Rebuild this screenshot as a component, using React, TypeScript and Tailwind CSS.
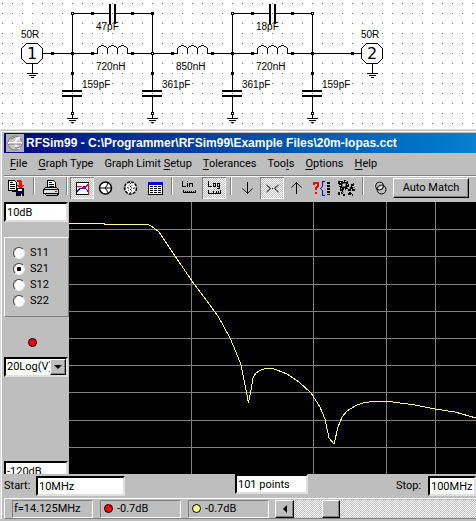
import { useState, type ReactNode } from "react";

const checker =
  "bg-[conic-gradient(#fff_25%,#bebebe_0_50%,#fff_0_75%,#bebebe_0)] bg-[length:2px_2px]";
const raised =
  "border border-t-white border-l-white border-r-black border-b-black bg-[#bebebe] shadow-[inset_-1px_-1px_0_#808080]";
const sunkenBox =
  "border-2 border-t-black border-l-black border-r-[#dfdfdf] border-b-[#dfdfdf] bg-white";
const field = `${sunkenBox} h-5 min-w-0 rounded-none px-px text-[11px] leading-4 text-black outline-none`;

/* ---------- schematic ---------- */

function Ground({ x, y }: { x: number; y: number }) {
  return (
    <g fill="#000">
      <rect x={x - 5} y={y} width="11" height="1" />
      <rect x={x - 3} y={y + 2} width="7" height="1" />
      <rect x={x - 1} y={y + 4} width="3" height="1" />
    </g>
  );
}

function Node({ x, y, open = false }: { x: number; y: number; open?: boolean }) {
  return (
    <g>
      <rect x={x - 1} y={y - 1} width="3" height="3" fill="#000" />
      {open && <rect x={x} y={y} width="1" height="1" fill="#fff" />}
    </g>
  );
}

function Label({ x, y, children }: { x: number; y: number; children: ReactNode }) {
  return (
    <text x={x} y={y} fontSize="10" fill="#000">
      {children}
    </text>
  );
}

function ShuntCap({ x, value }: { x: number; value: string }) {
  return (
    <g>
      <rect x={x} y="53" width="1" height="37" fill="#000" />
      <rect x={x} y="97" width="1" height="21" fill="#000" />
      <rect x={x - 10} y="90" width="20" height="2" fill="#000" />
      <rect x={x - 10} y="95" width="20" height="2" fill="#000" />
      <Node x={x} y={73} />
      <Node x={x} y={113} open />
      <Ground x={x} y={118} />
      <Label x={x + 10} y={88}>{value}</Label>
    </g>
  );
}

function SeriesCap({ x, value }: { x: number; value: string }) {
  return (
    <g>
      <path d={`M${x} 53V13h37v1h-36v39zM${x + 44} 13h37v40h-1v-39h-36z`} fill="#000" />
      <rect x={x + 37} y="4" width="2" height="20" fill="#000" />
      <rect x={x + 42} y="4" width="2" height="20" fill="#000" />
      <Node x={x + 20} y={13} />
      <Node x={x + 60} y={13} />
      <Label x={x + 24} y={30}>{value}</Label>
    </g>
  );
}

function Inductor({ x, value }: { x: number; value: string }) {
  const s = x + 5.5;
  return (
    <g>
      <path
        d={`M${x} 53.5H${s}V48.5L${s + 2} 46.5L${s + 5} 45.5L${s + 8} 46.5L${s + 10} 48.5L${s + 12} 46.5L${s + 15} 45.5L${s + 18} 46.5L${s + 20} 48.5L${s + 22} 46.5L${s + 25} 45.5L${s + 28} 46.5L${s + 30} 48.5V53.5H${x + 41}M${s + 10} 48.5V53.5M${s + 20} 48.5V53.5`}
        fill="none"
        stroke="#000"
      />
      <Node x={x} y={53} />
      <Node x={x + 40} y={53} />
      <Label x={x + 4} y={70}>{value}</Label>
    </g>
  );
}

function Port({ x, n }: { x: number; n: string }) {
  return (
    <g>
      <path
        d={`M${x - 5.5} 43.5h11l5 5v10l-5 5h-11l-5 -5v-10z`}
        fill="#fff"
        stroke="#000"
      />
      <rect x={x} y="63" width="1" height="10" fill="#000" />
      <Ground x={x} y={73} />
      <text x={x} y="59" fontSize="16" textAnchor="middle" className="font-['DejaVu_Sans',sans-serif]">
        {n}
      </text>
      <Label x={x - 11} y={38}>50R</Label>
    </g>
  );
}

function Schematic() {
  return (
    <svg
      className="block h-[129px] w-full font-['Liberation_Sans',Arial,sans-serif]"
      shapeRendering="crispEdges"
      role="img"
      aria-label="Low-pass filter schematic"
    >
      <defs>
        <pattern id="grid" width="10" height="10" patternUnits="userSpaceOnUse">
          <rect x="2" y="3" width="1" height="1" fill="#777" />
        </pattern>
      </defs>
      <rect width="100%" height="100%" fill="#fff" />
      <rect width="100%" height="100%" fill="url(#grid)" />
      <path d="M42 53.5h50M132 53.5h40M212 53.5h40M292 53.5h71" stroke="#000" />
      <Node x={52} y={53} />
      <Node x={352} y={53} />
      <SeriesCap x={72} value="47pF" />
      <SeriesCap x={232} value="18pF" />
      <Inductor x={92} value="720nH" />
      <Inductor x={172} value="850nH" />
      <Inductor x={252} value="720nH" />
      <ShuntCap x={72} value="159pF" />
      <ShuntCap x={152} value="361pF" />
      <ShuntCap x={232} value="361pF" />
      <ShuntCap x={312} value="159pF" />
      <Node x={72} y={13} open />
      <Node x={152} y={13} />
      <Node x={232} y={13} open />
      <Node x={312} y={13} open />
      <Node x={72} y={53} />
      <Node x={152} y={53} open />
      <Node x={232} y={53} />
      <Node x={312} y={53} />
      <Port x={32} n="1" />
      <Port x={372} n="2" />
    </svg>
  );
}

/* ---------- window chrome ---------- */

function TitleBar() {
  return (
    <div className="flex h-5 items-center gap-[2px] bg-linear-to-r from-[#000080] to-[#0a80d0] pl-[2px]">
      <svg className="size-[18px] shrink-0" viewBox="0 0 18 18">
        <rect width="18" height="18" fill="#b0b0b0" />
        <circle cx="9" cy="9" r="7" fill="#c8c8c8" stroke="#777" />
        <path d="M2 9h14M9 9q1-5 5-5M9 9q1 5 5 5" stroke="#fff" strokeWidth="2" fill="none" />
        <path d="M3 10h12M5 5l4-2M9 14l5-1" stroke="#777" fill="none" />
      </svg>
      <h1 className="truncate text-[12px] leading-5 font-bold whitespace-pre text-white font-['Liberation_Sans',Arial,sans-serif]">
        RFSim99 - C:\Programmer\RFSim99\Example Files\20m-lopas.cct
      </h1>
    </div>
  );
}

const menus: [string, string, string][] = [
  ["", "F", "ile"],
  ["", "G", "raph Type"],
  ["Graph Limit ", "S", "etup"],
  ["", "T", "olerances"],
  ["Too", "l", "s"],
  ["", "O", "ptions"],
  ["", "H", "elp"],
];

function MenuBar() {
  return (
    <nav className="flex h-[22px] items-center gap-[11px] pl-[6px]">
      {menus.map(([a, b, c]) => (
        <button key={a + b + c} type="button" className="whitespace-pre">
          {a}
          <u className="underline-offset-2">{b}</u>
          {c}
        </button>
      ))}
    </nav>
  );
}

function Tool({ label, on = false, children }: { label: string; on?: boolean; children: ReactNode }) {
  return (
    <button
      type="button"
      aria-label={label}
      aria-pressed={on}
      className={
        on
          ? `${checker} h-[22px] w-6 shrink-0 shadow-[inset_1px_1px_0_#808080,inset_-1px_-1px_0_#fff]`
          : "h-[22px] w-6 shrink-0"
      }
    >
      <svg className="block h-[22px] w-6" viewBox="0 0 24 22" fill="none" stroke="#000" shapeRendering="crispEdges">
        {children}
      </svg>
    </button>
  );
}

function Sep({ className }: { className: string }) {
  return (
    <div className={`flex h-[18px] shrink-0 justify-center ${className}`}>
      <div className="w-[2px] border-l border-l-[#808080] bg-white" />
    </div>
  );
}

function Gear({ x, y }: { x: number; y: number }) {
  return (
    <g>
      <circle cx={x} cy={y} r="4" strokeWidth="2" strokeDasharray="2 1" />
      <circle cx={x} cy={y} r="2.500" fill="#777" />
      <rect x={x - 1} y={y - 1} width="2" height="2" fill="#ddd" stroke="none" />
    </g>
  );
}

function Toolbar() {
  return (
    <div className="flex h-[26px] items-start border-t border-t-white pr-[7px]">
      <Tool label="Load file">
        <path d="M4.500 3.500h6l2 2v8h-8z" fill="#fff" />
        <path d="M6 5.500h3M6 7.500h5M6 9.500h5M6 11.500h5" />
        <path d="M7.500 14.500h5" />
        <path d="M13 3h3l2 2v3h2l-4 4-3-4h2V5h-2z" fill="#f00" stroke="none" />
        <path d="M12 11h8v8h-8z" fill="#000" stroke="none" />
        <path d="M14 12h4v2h-4z" fill="#fff" stroke="none" />
        <path d="M13 15h6v1h-6z" fill="#000080" stroke="none" />
        <path d="M17 17h1v2h-1z" fill="#fff" stroke="none" />
      </Tool>
      <Sep className="w-[11px]" />
      <Tool label="Print">
        <path d="M8.500 10.500V3.500h6l2 2v5z" fill="#fff" />
        <path d="M10 5.500h3M10 7.500h5M10 9.500h5" />
        <path d="M4.500 12.500l2-2h11l2 2v4h-15z" fill="#e0e0e0" />
        <path d="M5 12.500h14M6.500 18.500h12l1-2M6.500 16v2" />
        <path d="M16 14h2" stroke="#f00" />
      </Tool>
      <Sep className="w-[7px]" />
      <Tool label="Rectangular graph" on>
        <path d="M6.500 5.500h12v12h-12z" fill="#fff" />
        <path d="M7 14.500l3-3h2l2-2 4 5" stroke="#00f" />
        <path d="M7 9.500h4l3 2 4-4v10" stroke="#f00" />
      </Tool>
      <Tool label="Smith chart">
        <g shapeRendering="auto">
          <circle cx="11.500" cy="11" r="6" fill="#fff" strokeWidth="1.500" />
          <path d="M5 11h13M14 6q-1 3-3 5 2 2 3 5" />
        </g>
      </Tool>
      <Tool label="Polar chart">
        <g shapeRendering="auto">
          <circle cx="12.500" cy="11" r="6" fill="#fff" strokeWidth="1.500" strokeDasharray="3 1" />
          <circle cx="12.500" cy="11" r="3" strokeDasharray="1 2" />
          <path d="M7 11h11M12.500 6v11" strokeDasharray="1 2" />
        </g>
      </Tool>
      <Tool label="Table">
        <path d="M6.500 5.500h14v12h-14z" fill="#fff" />
        <path d="M6 5h15v3h-15z" fill="#00f" stroke="none" />
        <path d="M8 9.500h13M8 11.500h13M8 13.500h13M8 15.500h13" strokeDasharray="3 1" />
      </Tool>
      <Sep className="w-3" />
      <Tool label="Linear scale">
        <path d="M4.500 4v5.500h3M9.500 4v1M9.500 6v4M11.500 10V6.500h3V10" />
        <path d="M5 15.500h13M5.500 13v3M7.500 14v2M9.500 14v2M11.500 14v2M13.500 14v2M15.500 14v2M17.500 13v3" />
      </Tool>
      <Tool label="Log scale" on>
        <path d="M6.500 4v5.500h3M11.500 6.500h2v3h-2zM15.500 6.500h2v3h-2zM17.500 9v2.500h-3" />
        <path d="M6 16.500h13M6.500 13v3M11.500 14v2M14.500 14v2M16.500 14v2M18.500 13v3" />
      </Tool>
      <Sep className="w-[10px]" />
      <Tool label="Marker down">
        <path d="M11.500 5v12M6.500 11.500l5 5 5-5" shapeRendering="auto" />
      </Tool>
      <Tool label="Centre markers" on>
        <path d="M6.500 8l4 3.500-4 3.500M18.500 8l-4 3.500 4 3.500M12 11.500h1" shapeRendering="auto" />
      </Tool>
      <Tool label="Marker up">
        <path d="M12.500 5v12M7.500 10.500l5-5 5 5" shapeRendering="auto" />
      </Tool>
      <Tool label="Component query">
        <path d="M6 8V6h4v3l-2 2v2M8 15v2" stroke="#f00" strokeWidth="2" />
        <path d="M17 4.500h-2.500v5l-2 2 2 2v5h2.500" stroke="#00f" />
        <path d="M20.500 5v13" strokeWidth="3" strokeDasharray="2 1" />
      </Tool>
      <Tool label="Tune">
        <Gear x={12} y={8} />
        <path d="M7 4v4M8 12l3 2-2 4M7 15v4M11 18h2" strokeWidth="2" strokeDasharray="3 1" />
        <path d="M22 7l-3 2 1 3-3 1 1 3 3 2M20 13h3M16 17h2" strokeWidth="2" strokeDasharray="3 1" />
        <path d="M10 15h2M21 10h2" stroke="#777" />
      </Tool>
      <Sep className="w-[13px]" />
      <Tool label="Link traces">
        <g shapeRendering="auto">
          <circle cx="9.500" cy="8.500" r="3.500" stroke="#fff" />
          <circle cx="10.500" cy="9" r="4" />
          <circle cx="12.500" cy="12.500" r="4.500" />
        </g>
      </Tool>
      <button type="button" className={`${raised} mt-px h-5 min-w-0 flex-1 whitespace-nowrap`}>
        Auto Match
      </button>
    </div>
  );
}

/* ---------- graph ---------- */

const trace =
  "0,21.5 35,21.5 36,22.5 79,22.5 83,24.5 90,30 106,54 123,79 143,106 149,114 161,136 167,150 172,163 176,183 179.5,201 182,188 184,176 187,171 192,168 197,166.5 203,166.5 208,168 218,172 230,180 242,191 251,205 256,217 260,236 265,242 269,225 273,215 278,209 288,203 296,200.500 305,199.500 320,199.500 346,203 366,207 386,210 407,216";

function Graph() {
  return (
    <svg
      className="block h-[272px] min-w-0 flex-1 bg-black"
      viewBox="0 0 407 272"
      preserveAspectRatio="none"
      shapeRendering="crispEdges"
      role="img"
      aria-label="S21 magnitude against frequency"
    >
      <g fill="#808080">
        {[27, 54, 82, 109, 136, 163, 190, 218, 245].map((y) => (
          <rect key={y} x="0" y={y} width="407" height="1" />
        ))}
        {[122, 244, 317, 366].map((x) => (
          <rect key={x} x={x} y="0" width="1" height="272" />
        ))}
      </g>
      <polyline points={trace} fill="none" stroke="#ffff80" vectorEffect="non-scaling-stroke" />
    </svg>
  );
}

function Dot({ className }: { className: string }) {
  return <span className={`size-[9px] shrink-0 rounded-full border border-black ${className}`} />;
}

function SidePanel() {
  const [param, setParam] = useState("S21");
  return (
    <div className="flex h-[272px] w-[65px] shrink-0 flex-col overflow-hidden">
      <input aria-label="Top of scale" defaultValue="10dB" className={`${field} w-16 shrink-0`} />
      <div
        role="radiogroup"
        aria-label="Parameter"
        className="mt-[15px] shrink-0 border border-t-white border-l-white border-r-[#808080] border-b-[#808080] py-[7px] pl-2"
      >
        {["S11", "S21", "S12", "S22"].map((s) => (
          <label key={s} className="flex h-4 items-center gap-[5px]">
            <input
              type="radio"
              name="param"
              checked={param === s}
              onChange={() => setParam(s)}
              className="size-3 shrink-0 appearance-none rounded-full border border-t-[#404040] border-l-[#404040] border-r-[#e8e8e8] border-b-[#e8e8e8] bg-white checked:bg-[radial-gradient(circle,#000_2px,#fff_2.5px)]"
            />
            {s}
          </label>
        ))}
      </div>
      <div className="flex h-10 shrink-0 items-end justify-center pr-2 pb-[10px]">
        <Dot className="bg-[#f00]" />
      </div>
      <div className="relative shrink-0">
        <select
          aria-label="Scale type"
          className={`${field} block w-16 appearance-none overflow-hidden pr-4 text-clip`}
        >
          <option>20Log(V)</option>
        </select>
        <span className={`${raised} pointer-events-none absolute top-[2px] right-[3px] flex h-4 w-4 items-center justify-center`}>
          <span className="border-x-4 border-t-4 border-x-transparent border-t-black" />
        </span>
      </div>
      <input aria-label="Bottom of scale" defaultValue="-120dB" className={`${field} mt-auto -mb-[7px] w-16 shrink-0`} />
    </div>
  );
}

function SweepRow() {
  return (
    <div className="flex h-6 items-center">
      <label htmlFor="start" className="w-8 shrink-0">Start:</label>
      <input id="start" defaultValue="10MHz" className={`${field} w-[89px] shrink-0`} />
      <div className="flex-5" />
      <input aria-label="Number of points" defaultValue="101 points" className={`${field} w-[73px] shrink-0 self-start`} />
      <div className="flex-4" />
      <label htmlFor="stop" className="w-8 shrink-0">Stop:</label>
      <input id="stop" defaultValue="100MHz" className={`${field} w-12 shrink-0`} />
    </div>
  );
}

const cell =
  "flex h-[18px] w-[81px] shrink-0 items-center gap-1 border border-t-[#808080] border-l-[#808080] border-r-white border-b-white whitespace-nowrap";

function StatusBar() {
  return (
    <div className="flex h-[21px] items-center border-t border-b border-l border-t-white border-b-[#808080] border-l-white pl-[7px]">
      <div className="flex shrink-0 gap-[7px]">
        <div className={`${cell} pl-px`}>f=14.125MHz</div>
        <div className={`${cell} pl-[3px]`}>
          <Dot className="bg-[#f00]" />
          -0.7dB
        </div>
        <div className={`${cell} pl-[3px]`}>
          <Dot className="bg-[#ffff80]" />
          -0.7dB
        </div>
      </div>
      <div className={`${checker} ml-[6px] flex h-[18px] min-w-0 flex-1`}>
        <button
          type="button"
          aria-label="Scroll left"
          className={`${raised} flex h-full w-[19px] items-center justify-center`}
        >
          <span className="border-y-4 border-r-4 border-y-transparent border-r-black" />
        </button>
        <button type="button" aria-label="Scroll thumb" className={`${raised} ml-7 h-full w-[18px]`} />
      </div>
    </div>
  );
}

export default function App() {
  return (
    <main className="min-h-screen w-full bg-[#bebebe] text-[11px] leading-4 text-black font-[Roboto,'Liberation_Sans',sans-serif]">
      <Schematic />
      <section className="border-t border-l border-t-[#dcdcdc] border-l-[#dcdcdc] pt-px">
        <div className="border-t border-l border-white pt-px pl-[2px]">
          <TitleBar />
          <MenuBar />
          <div className="border-t border-t-[#808080]">
            <Toolbar />
          </div>
          <div className="flex">
            <SidePanel />
            <Graph />
          </div>
          <SweepRow />
          <StatusBar />
        </div>
      </section>
    </main>
  );
}
